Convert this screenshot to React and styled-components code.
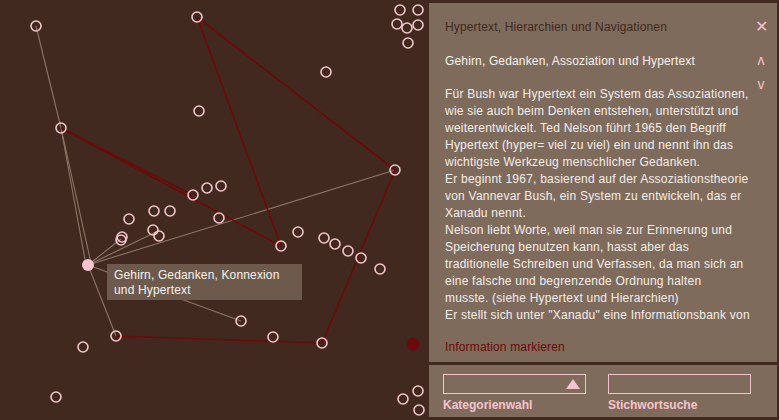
import React from 'react';
import styled, { createGlobalStyle } from 'styled-components';

const Global = createGlobalStyle`
  html, body { margin: 0; padding: 0; background: #42291f; }
  body { font-family: "Liberation Sans", Arial, sans-serif; }
`;

const Page = styled.div`
  display: flex;
  width: 779px;
  height: 420px;
  background: #42291f;
  overflow: hidden;
`;

const Canvas = styled.div`
  position: relative;
  width: 429px;
  height: 420px;
  flex: none;
`;

const Side = styled.div`
  display: flex;
  flex-direction: column;
  gap: 3px;
  width: 348px;
  padding: 3px 0 3px 0;
`;

const Panel = styled.div`
  background: #7f6b5c;
  flex: ${p => (p.grow ? 1 : 'none')};
  height: ${p => p.h || 'auto'};
  box-sizing: border-box;
  padding: ${p => p.pad || '0'};
  display: flex;
  flex-direction: column;
`;

const Row = styled.div`
  display: flex;
  justify-content: space-between;
  align-items: ${p => p.align || 'center'};
  height: ${p => p.h}px;
  padding-right: 10px;
`;

const Title = styled.div`
  font-size: 12px;
  letter-spacing: 0.15px;
  color: ${p => p.color};
  margin-top: ${p => p.mt || 0}px;
`;

const IconBtn = styled.span`
  color: #f6c3cc;
  font-size: ${p => p.size || 14}px;
  width: 12px;
  text-align: center;
  line-height: 1;
`;

const Arrows = styled.div`
  display: flex;
  flex-direction: column;
  gap: 10px;
  margin-top: 2px;
`;

const Body = styled.div`
  font-size: 12px;
  line-height: 17px;
  letter-spacing: 0.22px;
  color: #f3eee9;
  margin-top: 17px;
`;

const Line = styled.div`
  white-space: nowrap;
`;

const Mark = styled.div`
  font-size: 12px;
  letter-spacing: 0.15px;
  color: #6a0a0a;
  margin-top: 16px;
`;

const Controls = styled.div`
  display: flex;
  gap: 22px;
  padding: 9px 0 0 14px;
`;

const Field = styled.div`
  display: flex;
  flex-direction: column;
  gap: 4px;
`;

const Box = styled.div`
  width: 141px;
  height: 18px;
  border: 1px solid #f6c3cc;
  position: relative;
`;

const Tri = styled.span`
  position: absolute;
  right: 5px;
  top: 4px;
  width: 0;
  height: 0;
  border-left: 7px solid transparent;
  border-right: 7px solid transparent;
  border-bottom: 10px solid #f6c3cc;
`;

const FieldLabel = styled.div`
  font-size: 12px;
  font-weight: bold;
  color: #f6c3cc;
`;

const Tip = styled.div`
  position: absolute;
  left: 107px;
  top: 264px;
  width: 188px;
  height: 32px;
  padding: 4px 0 0 7px;
  background: #6e5a4c;
  color: #f6f2ee;
  font-size: 12px;
  line-height: 15px;
  letter-spacing: 0.15px;
`;

const nodes = [
  [36, 26], [197, 17], [326, 72], [199, 111], [61, 128], [395, 170],
  [193, 195], [207, 188], [221, 186], [129, 219], [154, 211], [170, 211],
  [219, 218], [122, 237], [121, 240], [153, 230], [159, 236],
  [298, 232], [281, 246], [324, 238], [335, 244], [348, 251], [361, 258], [380, 269],
  [241, 321], [116, 336], [83, 347], [273, 337], [322, 343], [56, 397],
  [400, 10], [418, 10], [397, 24], [407, 28], [418, 25], [408, 43],
  [418, 391], [403, 399], [419, 410],
];

const greyEdges = [
  [36, 26, 61, 128], [61, 128, 86, 265], [61, 128, 91, 263],
  [88, 265, 121, 239], [88, 265, 156, 232], [88, 265, 395, 170],
  [88, 265, 241, 321], [88, 265, 116, 336],
];

const redEdges = [
  [197, 17, 281, 246], [197, 17, 395, 170], [61, 128, 281, 246],
  [61, 128, 193, 195], [395, 170, 322, 343], [116, 336, 322, 343],
];

const lines = [
  'Für Bush war Hypertext ein System das Assoziationen,',
  'wie sie auch beim Denken entstehen, unterstützt und',
  'weiterentwickelt. Ted Nelson führt 1965 den Begriff',
  'Hypertext (hyper= viel zu viel) ein und nennt ihn das',
  'wichtigste Werkzeug menschlicher Gedanken.',
  'Er beginnt 1967, basierend auf der Assoziationstheorie',
  'von Vannevar Bush, ein System zu entwickeln, das er',
  'Xanadu nennt.',
  'Nelson liebt Worte, weil man sie zur Erinnerung und',
  'Speicherung benutzen kann, hasst aber das',
  'traditionelle Schreiben und Verfassen, da man sich an',
  'eine falsche und begrenzende Ordnung halten',
  'musste. (siehe Hypertext und Hierarchien)',
  'Er stellt sich unter "Xanadu" eine Informationsbank von',
];

function Graph() {
  return (
    <svg width="429" height="420" style={{ display: 'block' }}>
      {greyEdges.map((e, i) => (
        <line key={'g' + i} x1={e[0]} y1={e[1]} x2={e[2]} y2={e[3]} stroke="#8a7666" strokeWidth="1.1" />
      ))}
      {redEdges.map((e, i) => (
        <line key={'r' + i} x1={e[0]} y1={e[1]} x2={e[2]} y2={e[3]} stroke="#6a0a0a" strokeWidth="1.7" />
      ))}
      {nodes.map((n, i) => (
        <circle key={i} cx={n[0]} cy={n[1]} r="5" fill="none" stroke="#f4c6cd" strokeWidth="1.6" />
      ))}
      <circle cx="88" cy="265" r="6" fill="#f6c3cc" />
      <circle cx="413" cy="344" r="6.5" fill="#6a0a0a" />
    </svg>
  );
}

export default function App() {
  return (
    <Page>
      <Global />
      <Canvas>
        <Graph />
        <Tip>
          Gehirn, Gedanken, Konnexion<br />und Hypertext
        </Tip>
      </Canvas>
      <Side>
        <Panel grow pad="0 0 0 16px">
          <Row h={48}>
            <Title color="#3e2a20">Hypertext, Hierarchien und Navigationen</Title>
            <IconBtn size={16}>✕</IconBtn>
          </Row>
          <Row h={18} align="flex-start">
            <Title color="#f6f2ee" mt={3}>Gehirn, Gedanken, Assoziation und Hypertext</Title>
            <Arrows>
              <IconBtn>ʌ</IconBtn>
              <IconBtn>v</IconBtn>
            </Arrows>
          </Row>
          <Body>
            {lines.map((l, i) => <Line key={i}>{l}</Line>)}
          </Body>
          <Mark>Information markieren</Mark>
        </Panel>
        <Panel h="52px">
          <Controls>
            <Field>
              <Box><Tri /></Box>
              <FieldLabel>Kategorienwahl</FieldLabel>
            </Field>
            <Field>
              <Box />
              <FieldLabel>Stichwortsuche</FieldLabel>
            </Field>
          </Controls>
        </Panel>
      </Side>
    </Page>
  );
}
